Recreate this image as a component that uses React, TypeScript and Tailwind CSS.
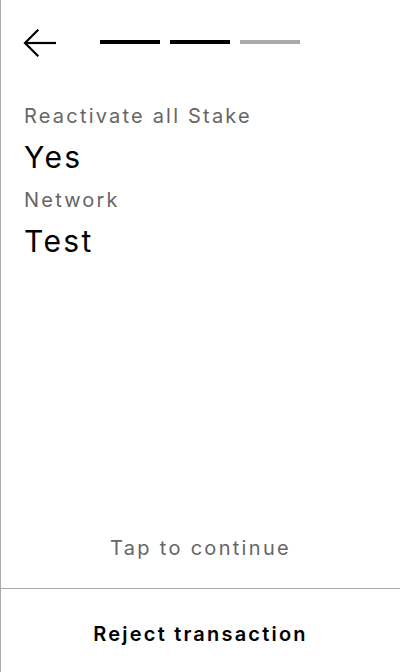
import React from "react";

const BackArrow: React.FC = () => (
  <svg width="34" height="28" viewBox="0 0 34 28" fill="none" className="block">
    <path d="M2 14 H33" stroke="#000" strokeWidth="2.2" />
    <path d="M14.5 1.5 L2 14 L14.5 26.5" stroke="#000" strokeWidth="2.2" strokeLinecap="square" />
  </svg>
);

const Field: React.FC<{ label: string; value: string; first?: boolean }> = ({ label, value, first }) => (
  <div className={first ? "" : "mt-[11px]"}>
    <div className="text-[20px] leading-7 tracking-[2.2px] text-[#666]">{label}</div>
    <div className="mt-[9px] text-[30px] leading-9 tracking-[2.4px] text-black">{value}</div>
  </div>
);

export default function App() {
  return (
    <div
      className="w-[400px] h-[672px] flex flex-col bg-white border-l border-[#aaa] overflow-hidden"
      style={{ fontFamily: "Inter, 'Noto Sans', sans-serif" }}
    >
      <div className="flex items-center pl-[22px] pt-[29px]">
        <BackArrow />
        <div className="ml-[43px] flex gap-[10px] -mt-[2px]">
          <div className="w-[60px] h-[4px] bg-black" />
          <div className="w-[60px] h-[4px] bg-black" />
          <div className="w-[60px] h-[4px] bg-[#aaa]" />
        </div>
      </div>

      <div className="px-[23px] pt-[45px]">
        <Field first label="Reactivate all Stake" value="Yes" />
        <Field label="Network" value="Test" />
      </div>

      <div className="flex-1" />

      <div className="text-center text-[20px] leading-7 tracking-[2.3px] text-[#666] pb-[26px]">
        Tap to continue
      </div>
      <div className="border-t border-[#aaa] h-[84px] pt-[31px] text-center">
        <span className="text-[20px] leading-7 tracking-[2.2px] font-semibold text-black">
          Reject transaction
        </span>
      </div>
    </div>
  );
}
